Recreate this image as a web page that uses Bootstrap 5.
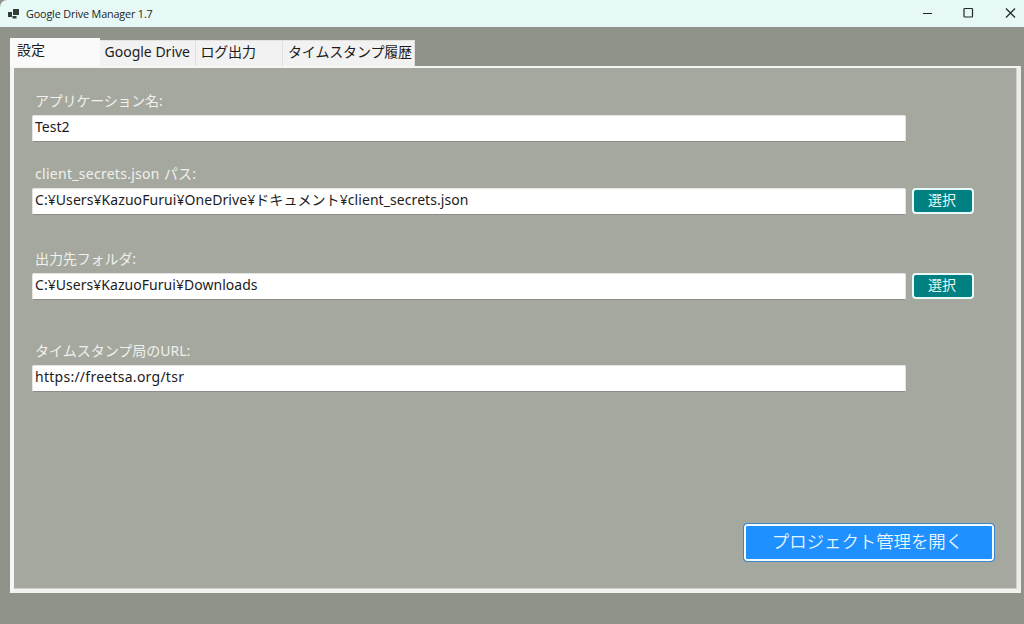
<!DOCTYPE html>
<html lang="ja">
<head>
<meta charset="utf-8">
<title>Google Drive Manager 1.7</title>
<link href="https://cdn.jsdelivr.net/npm/bootstrap@5.3.0/dist/css/bootstrap.min.css" rel="stylesheet">
<style>
body{height:624px;overflow:hidden;background:#90938a;font-family:"Noto Sans","Noto Sans CJK JP",sans-serif;font-size:14px;line-height:20px;color:#1c1c1c}
.titlebar{height:27px;background:#e6f9f7;border-top-left-radius:7px;font-size:10.8px;font-family:"Open Sans","Noto Sans",sans-serif;color:#222}
.window-title{margin-left:6px;letter-spacing:-.15px}
.app-shell{height:624px}
.workspace{padding:11px 3px 0 10px}
.tabs{height:28px;border:0}
.tabs .nav-link{border:0;border-radius:0;height:26px;padding:1px 0 0 4.5px;background:#f2f2f2;color:#1c1c1c;border-top:1px solid #e2e2de;border-right:1px solid #dfdfdd;white-space:nowrap}
.tabs .nav-link.active{height:28px;background:#fafafa;color:#1c1c1c;padding:1px 0 0 7px;border-color:#fafafa}
.tab-settings{width:90px}.tab-drive{width:96px}.tab-log{width:87px;letter-spacing:-.2px}
.tabs .tab-stamp{width:132px;padding-left:5px;letter-spacing:-.15px}
.panel{height:527px;border:solid #f6f6f4;border-width:2px 4px 4px;border-right-color:#ecede9;border-bottom-color:#f2f2ef;background:#a5a89f;padding:22px 22px 0 18px;box-shadow:inset -1px -1px #cfd0cb}
.field-name{height:25px;padding:0 0 0 3px;color:#f0f0ec;margin:0;display:block;line-height:21px}
.field-box{width:874px;height:27px;border:1px solid #e4e4e0;border-bottom-color:#8c8f87;border-radius:2px;padding:0 0 4px 2px;background:#fff;color:#1c1c1c;font-size:14px;line-height:20px}
.field-box:focus{box-shadow:none}
.row-app{height:73px}.row-secret{height:85px}.row-folder{height:92px}.row-url{height:183px}
.row-app .field-name{letter-spacing:-.2px}
.row-secret .field-name{letter-spacing:.28px}
.row-folder .field-name{letter-spacing:-.1px}
.row-secret .field-box{letter-spacing:.07px;padding-bottom:5px}
.row-folder .field-box{letter-spacing:.04px}
.row-url .field-box{letter-spacing:.26px}
.pick{width:62px;height:26px;margin-left:6px;padding:0 2px 2px 0;border:2px solid #e8fbfa;border-radius:4px;background:#008080;color:#e4f8f6;font-size:14px;line-height:18px}
.open-project{width:252px;height:39px;border:1px solid #3d87c4;box-shadow:inset 0 0 0 2px #f4faff;border-radius:4px;background:#1e90ff;color:#e9f5ff;padding:0 3px 3px 0;font-size:17.4px;line-height:20px;font-weight:350}
</style>
</head>
<body>
<div class="app-shell d-flex flex-column">
  <header class="titlebar d-flex align-items-center flex-shrink-0">
    <svg class="ms-2" width="12" height="12" viewBox="1 0 12 12"><path fill="#333b3b" d="M1 4h4v5H1zM6 1h6v6H6zM5.500 8h4v2.500h-4z"/></svg>
    <span class="window-title">Google Drive Manager 1.7</span>
    <svg class="ms-auto" width="104" height="27" viewBox="0 0 104 27" fill="none" stroke="#1e2929" stroke-width="1.2"><path d="M3 13.500h9M86 8.500l9 9m0-9l-9 9"/><rect x="44" y="8.500" width="8.500" height="8.500" rx=".8"/></svg>
  </header>
  <main class="workspace">
    <ul class="nav tabs align-items-end flex-nowrap">
      <li><a class="nav-link active tab-settings">設定</a></li>
      <li><a class="nav-link tab-drive">Google Drive</a></li>
      <li><a class="nav-link tab-log">ログ出力</a></li>
      <li><a class="nav-link tab-stamp">タイムスタンプ履歴</a></li>
    </ul>
    <section class="panel d-flex flex-column">
      <div class="row-app"><label class="field-name">アプリケーション名:</label><input class="form-control field-box" value="Test2"></div>
      <div class="row-secret"><label class="field-name">client_secrets.json パス:</label>
        <div class="d-flex"><input class="form-control field-box" value="C:¥Users¥KazuoFurui¥OneDrive¥ドキュメント¥client_secrets.json"><button class="btn pick">選択</button></div></div>
      <div class="row-folder"><label class="field-name">出力先フォルダ:</label>
        <div class="d-flex"><input class="form-control field-box" value="C:¥Users¥KazuoFurui¥Downloads"><button class="btn pick">選択</button></div></div>
      <div class="row-url"><label class="field-name">タイムスタンプ局のURL:</label><input class="form-control field-box" value="https://freetsa.org/tsr"></div>
      <button class="btn open-project align-self-end">プロジェクト管理を開く</button>
    </section>
  </main>
</div>
<script src="https://cdn.jsdelivr.net/npm/bootstrap@5.3.0/dist/js/bootstrap.bundle.min.js"></script>
</body>
</html>
